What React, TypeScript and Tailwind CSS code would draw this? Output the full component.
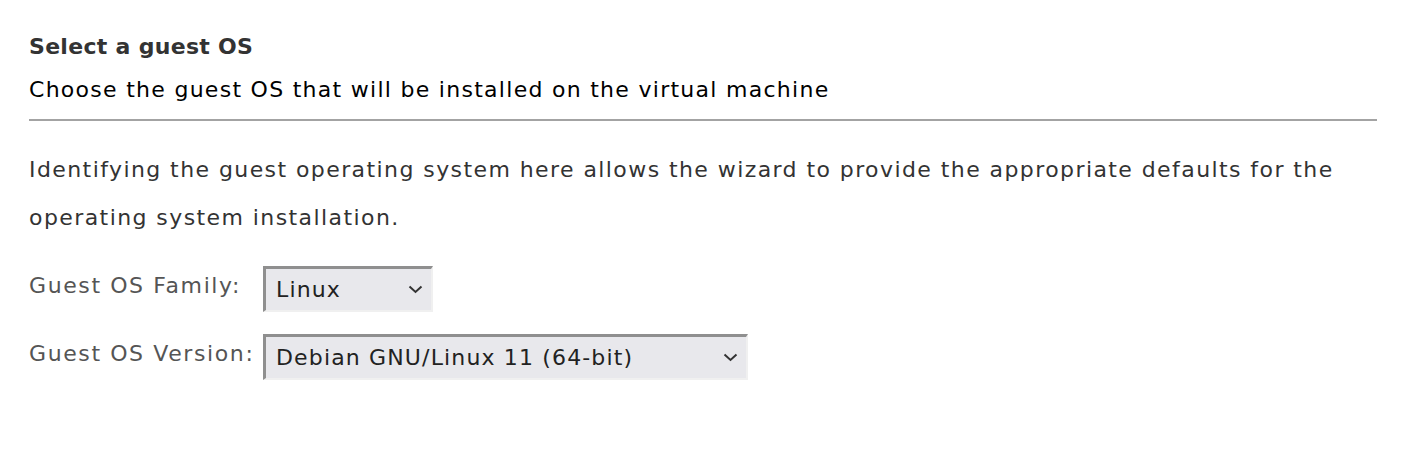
import React from "react";

function Chevron() {
  return (
    <svg width="15" height="9" viewBox="0 0 15 9" fill="none" className="shrink-0">
      <path d="M1.5 1.5 L7.5 7 L13.5 1.5" stroke="#333" strokeWidth="2" />
    </svg>
  );
}

function Select({ value, width }: { value: string; width: string }) {
  return (
    <div
      className={`${width} h-[46px] flex items-center justify-between pl-[10px] pr-[8px] bg-[#e8e8ec] border-t-[3px] border-l-[3px] border-r-[2px] border-b-[2px] border-t-[#8f8f8f] border-l-[#8f8f8f] border-r-[#f0f0f0] border-b-[#f0f0f0] text-[22px] tracking-[1.15px] text-[#222]`}
    >
      <span>{value}</span>
      <Chevron />
    </div>
  );
}

export default function App() {
  return (
    <div className="w-[1416px] h-[450px] bg-white pl-[29px] pr-[39px] pt-[32px] font-['DejaVu_Sans',sans-serif]">
      <div className="text-[22px] font-bold tracking-[0.3px] text-[#333] leading-[30px]">Select a guest OS</div>
      <div className="text-[22px] tracking-[1.28px] text-black leading-[30px] mt-[13px]">
        Choose the guest OS that will be installed on the virtual machine
      </div>
      <div className="h-[2px] bg-[#a3a3a3] mt-[14px]" />
      <div className="text-[22px] tracking-[1.42px] text-[#333] leading-[48px] mt-[25px]">
        Identifying the guest operating system here allows the wizard to provide the appropriate defaults for the
        operating system installation.
      </div>
      <div className="flex flex-col gap-[22px] mt-[24px] text-[22px] text-[#555]">
        <div className="flex items-center gap-[22px]">
          <span className="w-[212px] mb-[7px] tracking-[1.6px] whitespace-nowrap">Guest OS Family:</span>
          <Select value="Linux" width="w-[170px]" />
        </div>
        <div className="flex items-center gap-[22px]">
          <span className="w-[212px] mb-[7px] tracking-[1.6px] whitespace-nowrap">Guest OS Version:</span>
          <Select value="Debian GNU/Linux 11 (64-bit)" width="w-[485px]" />
        </div>
      </div>
    </div>
  );
}
